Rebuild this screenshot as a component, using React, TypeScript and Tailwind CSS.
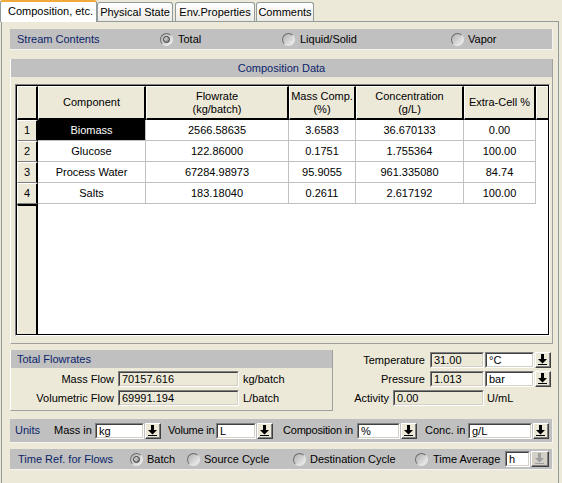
import type { ReactNode } from 'react'

const navy = 'text-[#0A246A]'

function Radio({ checked = false }: { checked?: boolean }) {
  return (
    <span className="flex h-[13px] w-[13px] shrink-0 items-center justify-center rounded-full border border-t-[#6b6b6b] border-l-[#6b6b6b] border-r-[#e8e8e8] border-b-[#e8e8e8] bg-gradient-to-br from-[#b0b0b0] to-[#f2f2f2]">
      {checked ? (
        <span className="h-[7px] w-[7px] rounded-full border border-[#333] bg-gradient-to-br from-[#f4f4f4] to-[#7a7a7a]" />
      ) : null}
    </span>
  )
}

function RadioItem({ label, checked, w, gap = 'gap-[5px]' }: { label: string; checked?: boolean; w: string; gap?: string }) {
  return (
    <div className={`flex shrink-0 items-center ${gap} ${w}`}>
      <Radio checked={checked} />
      <span className="whitespace-nowrap">{label}</span>
    </div>
  )
}

function TextBox({ w, value, white = false }: { w: string; value: string; white?: boolean }) {
  return (
    <div className={`h-[16px] shrink-0 border border-t-[#808080] border-l-[#808080] border-r-white border-b-white ${w}`}>
      <div
        className={`h-full border border-t-[#404040] border-l-[#404040] border-r-[#D4D0C8] border-b-[#D4D0C8] pl-[2px] text-[11px] leading-[12px] whitespace-nowrap ${
          white ? 'bg-white' : 'bg-[#ECE9D8]'
        }`}
      >
        {value}
      </div>
    </div>
  )
}

function DropButton({ disabled = false, w = 'w-[16px]' }: { disabled?: boolean; w?: string }) {
  return (
    <div className={`h-[16px] shrink-0 border border-t-white border-l-white border-r-[#404040] border-b-[#404040] ${w} ${disabled ? 'bg-[#D4D0C8]' : 'bg-[#ECE9D8]'}`}>
      <div className="flex h-full items-center justify-center border-r border-b border-r-[#808080] border-b-[#808080]">
        <svg width="9" height="11" viewBox="0 0 9 11">
          <path d="M3 0h3v5h3l-4.5 4.5L0 5h3z" fill={disabled ? '#a0a0a0' : '#000'} />
          <rect x="0" y="10" width="9" height="1" fill={disabled ? '#a0a0a0' : '#000'} />
        </svg>
      </div>
    </div>
  )
}

function Bar({ children, h, className = '' }: { children: ReactNode; h: string; className?: string }) {
  return (
    <div className={`flex items-center border-b border-r border-b-[#f4f4f4] border-r-[#f4f4f4] bg-[#C0C0C0] ${h} ${className}`}>
      {children}
    </div>
  )
}

const columns = [
  { w: 'w-[108px]', title: ['Component'] },
  { w: 'w-[143px]', title: ['Flowrate', '(kg/batch)'] },
  { w: 'w-[67px]', title: ['Mass Comp.', '(%)'] },
  { w: 'w-[108px]', title: ['Concentration', '(g/L)'] },
  { w: 'w-[72px]', title: ['Extra-Cell %'] },
]

const rows = [
  ['Biomass', '2566.58635', '3.6583', '36.670133', '0.00'],
  ['Glucose', '122.86000', '0.1751', '1.755364', '100.00'],
  ['Process Water', '67284.98973', '95.9055', '961.335080', '84.74'],
  ['Salts', '183.18040', '0.2611', '2.617192', '100.00'],
]

function CompositionGrid() {
  return (
    <div className="h-[252px] border border-t-[#808080] border-l-[#808080] border-r-white border-b-white">
      <div className="flex h-full flex-col border border-black bg-white">
        <div className="flex h-[34px] shrink-0">
          <div className="w-[21px] shrink-0 border-t border-l border-r-2 border-b-2 border-t-white border-l-white border-r-black border-b-black bg-[#ECE9D8]" />
          {columns.map((col) => (
            <div
              key={col.title[0]}
              className={`flex shrink-0 flex-col items-center justify-center border-t border-l border-r-2 border-b-2 border-t-white border-l-white border-r-black border-b-black bg-[#ECE9D8] text-center leading-[13px] ${col.w}`}
            >
              {col.title.map((line) => (
                <span key={line}>{line}</span>
              ))}
            </div>
          ))}
          <div className="flex-1 border-t border-l border-b-2 border-t-white border-l-white border-b-black bg-[#ECE9D8]" />
        </div>

        {rows.map((row, index) => (
          <div key={row[0]} className="flex h-[21px] shrink-0">
            <div className="flex w-[21px] shrink-0 items-center justify-center border-t border-l border-r-2 border-b border-t-white border-l-white border-r-black border-b-[#808080] bg-[#ECE9D8]">
              {index + 1}
            </div>
            {row.map((cell, c) => (
              <div
                key={c}
                className={`flex shrink-0 items-center justify-center border-r border-b border-r-[#C0C0C0] border-b-[#C0C0C0] ${columns[c].w} ${
                  index === 0 && c === 0 ? 'bg-black text-white' : 'bg-white'
                }`}
              >
                {cell}
              </div>
            ))}
          </div>
        ))}

        <div className="flex flex-1">
          <div className="w-[21px] shrink-0 border-t-2 border-l border-r-2 border-t-black border-l-white border-r-black bg-[#ECE9D8]" />
          <div className="flex-1 bg-white" />
        </div>
      </div>
    </div>
  )
}

export default function App() {
  return (
    <div className="h-[483px] w-[562px] overflow-hidden bg-[#ECE9D8] font-['Liberation_Sans',Arial,sans-serif] text-[11px] leading-[13px] text-black">
      {/* tabs */}
      <div className="flex h-[21px] items-end">
        <div className="relative z-10 flex h-[22px] w-[97px] shrink-0 items-center self-start rounded-t-[3px] border-t-2 border-l border-r border-t-[#F2A93B] border-l-[#919B9C] border-r-[#919B9C] bg-white pl-[7px] pb-[1px]">
          Composition, etc.
        </div>
        <div className="flex h-[19px] w-[76px] shrink-0 items-center justify-center rounded-t-[3px] border border-b-0 border-[#919B9C] bg-gradient-to-b from-white to-[#ECEBE6]">
          Physical State
        </div>
        <div className="ml-[2px] flex h-[19px] w-[80px] shrink-0 items-center justify-center rounded-t-[3px] border border-b-0 border-[#919B9C] bg-gradient-to-b from-white to-[#ECEBE6]">
          Env.Properties
        </div>
        <div className="ml-[1px] flex h-[19px] w-[58px] shrink-0 items-center justify-center rounded-t-[3px] border border-b-0 border-[#919B9C] bg-gradient-to-b from-white to-[#ECEBE6]">
          Comments
        </div>
      </div>

      {/* panel */}
      <div className="ml-[1px] h-[462px] w-[558px] border-t border-l border-r border-[#919B9C] bg-[#ECE9D8] pt-[7px] pl-[8px] pr-[5px]">
        <Bar h="h-[21px]">
          <span className={`w-[150px] shrink-0 pl-[7px] ${navy}`}>Stream Contents</span>
          <RadioItem label="Total" checked w="w-[122px]" />
          <RadioItem label="Liquid/Solid" w="w-[169px]" />
          <RadioItem label="Vapor" w="w-[80px]" gap="gap-[4px]" />
        </Bar>

        <div className="mt-[9px] border-l border-r border-b border-l-white border-r-[#A0A0A0] border-b-[#A0A0A0]">
          <div className={`h-[18px] bg-[#C0C0C0] text-center leading-[18px] ${navy}`}>Composition Data</div>
          <div className="pt-[7px] pb-[7px] pl-[4px] pr-[2px]">
            <CompositionGrid />
          </div>
        </div>

        <div className="mt-[6px] flex h-[61px]">
          <div className="w-[323px] shrink-0 border-l border-r border-b border-l-white border-r-[#A0A0A0] border-b-[#A0A0A0]">
            <div className={`h-[18px] bg-[#C0C0C0] pl-[6px] leading-[18px] ${navy}`}>Total Flowrates</div>
            <div className="flex flex-col gap-[3px] pt-[3px]">
              <div className="flex items-center">
                <span className="w-[103px] shrink-0 text-right">Mass Flow</span>
                <span className="w-[4px] shrink-0" />
                <TextBox w="w-[121px]" value="70157.616" />
                <span className="ml-[4px]">kg/batch</span>
              </div>
              <div className="flex items-center">
                <span className="w-[103px] shrink-0 text-right">Volumetric Flow</span>
                <span className="w-[4px] shrink-0" />
                <TextBox w="w-[121px]" value="69991.194" />
                <span className="ml-[4px]">L/batch</span>
              </div>
            </div>
          </div>

          <div className="flex flex-1 flex-col gap-[3px] pt-[2px]">
            <div className="flex items-center">
              <span className="w-[92px] shrink-0 text-right">Temperature</span>
              <span className="w-[5px] shrink-0" />
              <TextBox w="w-[54px]" value="31.00" />
              <span className="w-[1px] shrink-0" />
              <TextBox w="w-[49px]" value="°C" white />
              <span className="w-[1px] shrink-0" />
              <DropButton />
            </div>
            <div className="flex items-center">
              <span className="w-[92px] shrink-0 text-right">Pressure</span>
              <span className="w-[5px] shrink-0" />
              <TextBox w="w-[54px]" value="1.013" />
              <span className="w-[1px] shrink-0" />
              <TextBox w="w-[49px]" value="bar" white />
              <span className="w-[1px] shrink-0" />
              <DropButton />
            </div>
            <div className="flex items-center">
              <span className="w-[56px] shrink-0 text-right">Activity</span>
              <span className="w-[4px] shrink-0" />
              <TextBox w="w-[91px]" value="0.00" />
              <span className="ml-[3px]">U/mL</span>
            </div>
          </div>
        </div>

        <Bar h="h-[24px]" className="mt-[8px]">
          <span className={`w-[44px] shrink-0 pl-[5px] ${navy}`}>Units</span>
          <span className="w-[41px] shrink-0 whitespace-nowrap">Mass in</span>
          <TextBox w="w-[49px]" value="kg" white />
          <span className="w-[1px] shrink-0" />
          <DropButton />
          <span className="ml-[7px] w-[48px] shrink-0 whitespace-nowrap tracking-[-0.2px]">Volume in</span>
          <TextBox w="w-[40px]" value="L" white />
          <span className="w-[1px] shrink-0" />
          <DropButton />
          <span className="ml-[10px] w-[74px] shrink-0 whitespace-nowrap tracking-[-0.2px]">Composition in</span>
          <TextBox w="w-[43px]" value="%" white />
          <span className="w-[1px] shrink-0" />
          <DropButton />
          <span className="ml-[8px] w-[43px] shrink-0 whitespace-nowrap">Conc. in</span>
          <TextBox w="w-[64px]" value="g/L" white />
          <span className="w-[1px] shrink-0" />
          <DropButton />
        </Bar>

        <Bar h="h-[21px]" className="mt-[6px]">
          <span className={`w-[120px] shrink-0 pl-[8px] ${navy}`}>Time Ref. for Flows</span>
          <RadioItem label="Batch" checked w="w-[57px]" gap="gap-[4px]" />
          <RadioItem label="Source Cycle" w="w-[106px]" gap="gap-[4px]" />
          <RadioItem label="Destination Cycle" w="w-[122px]" gap="gap-[4px]" />
          <RadioItem label="Time Average" w="w-[90px]" />
          <TextBox w="w-[25px]" value="h" white />
          <span className="w-[1px] shrink-0" />
          <DropButton disabled w="w-[18px]" />
        </Bar>
      </div>
    </div>
  )
}
